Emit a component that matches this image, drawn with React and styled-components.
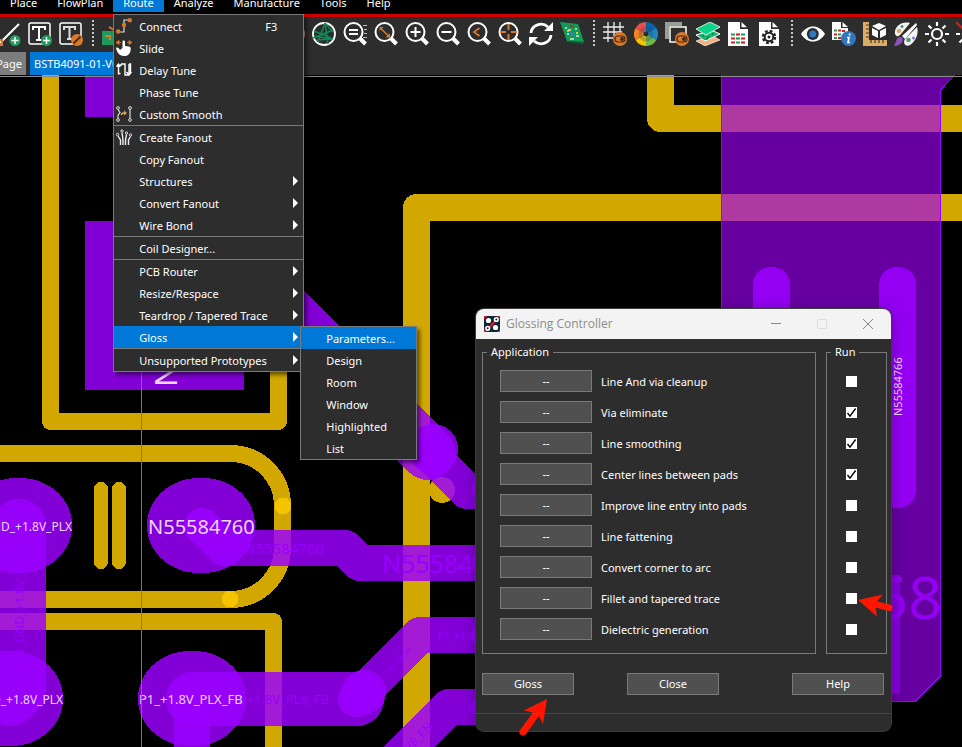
import React from "react";
import styled, { createGlobalStyle, css } from "styled-components";

const UI_FONT = '"Noto Sans", "Open Sans", sans-serif';
const PANEL = "#2d2d2d";
const EDGE = "#7a7a7a";
const ACCENT = "#0078d7";
const GOLD = "#d2a800";
const ORANGE = "#d9792b";
const GREEN = "#1f9a5a";
const BLUE = "#3277bd";
const COPPER = "rgba(155, 0, 255, 0.84)";
const VIOLET = "#9800ff";

const GlobalStyle = createGlobalStyle`
  *, *::before, *::after { box-sizing: border-box; }
  body {
    margin: 0;
    overflow: hidden;
    background: #000;
    font-family: ${UI_FONT};
    font-size: 11px;
    color: #fff;
  }
  button, input { font: inherit; color: inherit; }
`;

const App = styled.div`
  display: flex;
  flex-direction: column;
  height: 100vh;
  overflow: hidden;
`;

/* ---------- menu bar ---------- */

const MenuBar = styled.nav`
  position: relative;
  z-index: 3;
  display: flex;
  flex: none;
  height: 14px;
  background: #000;
`;

const MenuSlot = styled.div`
  position: relative;
`;

const MenuTitle = styled.button`
  display: flex;
  align-items: flex-start;
  height: 12px;
  padding: 0 10px;
  border: 0;
  background: ${(p) => (p.$open ? ACCENT : "transparent")};
  color: #fff;
  line-height: 6px;
  white-space: nowrap;
`;

const popup = css`
  position: absolute;
  border: 1px solid ${EDGE};
  background: ${PANEL};
  box-shadow: 3px 3px 4px rgba(0, 0, 0, 0.5);
`;

const Dropdown = styled.div`
  ${popup}
  top: 14px;
  left: 0;
  width: 191px;
`;

const Submenu = styled.div`
  ${popup}
  top: 0;
  left: 186px;
  width: 117px;
`;

const MenuGroup = styled.div`
  & + & {
    border-top: 1px solid ${EDGE};
  }
`;

const ItemWrap = styled.div`
  position: relative;
`;

const MenuItem = styled.button`
  display: grid;
  grid-template-columns: 25px 1fr auto 10px;
  align-items: center;
  width: 100%;
  height: 22px;
  padding: 0;
  border: 0;
  background: ${(p) => (p.$active ? ACCENT : "transparent")};
  color: #fff;
  text-align: left;
  white-space: nowrap;
`;

const ItemIcon = styled.span`
  display: flex;
  width: 16px;
  height: 16px;
  margin-left: 2px;
`;

const Shortcut = styled.span`
  padding-right: 16px;
`;

const SubArrow = styled.span`
  width: 0;
  height: 0;
  border: solid transparent;
  border-width: 5px 0 5px 5px;
  border-left-color: #fff;
`;

/* ---------- toolbar and tabs ---------- */

const Toolbar = styled.div`
  display: flex;
  flex: none;
  gap: 7px;
  height: 38px;
  padding: 5px 0;
  margin-left: -3px;
  border-top: 3px solid #cf0000;
  background: ${PANEL};
`;

const ToolButton = styled.button`
  flex: none;
  width: 24px;
  height: 24px;
  padding: 0;
  border: 0;
  background: none;

  svg {
    display: block;
  }
`;

const ToolDivider = styled.span`
  flex: none;
  width: 5px;
  height: 26px;
  margin-top: -2px;
  background: repeating-linear-gradient(#c8c8c8 0 2px, transparent 2px 4px) center / 2px 100% no-repeat;
`;

const TabRow = styled.div`
  display: flex;
  flex: none;
  gap: 4px;
  height: 23px;
  background: ${PANEL};
`;

const Tab = styled.button`
  display: flex;
  align-items: center;
  justify-content: ${(p) => (p.$active ? "flex-start" : "flex-end")};
  width: ${(p) => (p.$active ? "110px" : "26px")};
  padding: 0 4px;
  border: 0;
  background: ${(p) => (p.$active ? ACCENT : "#7d7d7d")};
  color: #fff;
  white-space: nowrap;
`;

/* ---------- board ---------- */

const Workspace = styled.main`
  position: relative;
  display: flex;
  flex: 1;
  min-height: 0;
`;

const BoardSvg = styled.svg`
  flex: 1;
  min-width: 0;
  font-family: "Noto Sans", sans-serif;
`;

const Arrow = styled.svg`
  position: absolute;
  z-index: 2;
  left: ${(p) => p.$x}px;
  top: ${(p) => p.$y}px;
  pointer-events: none;
`;

/* ---------- dialog ---------- */

const Dialog = styled.section`
  position: absolute;
  z-index: 1;
  left: 476px;
  top: 234px;
  width: 415px;
  overflow: hidden;
  border-radius: 8px;
  background: ${PANEL};
  box-shadow: 0 0 0 1px #3c3c3c, 0 2px 14px rgba(0, 0, 0, 0.35);
`;

const TitleBar = styled.header`
  display: flex;
  align-items: center;
  height: 30px;
  padding-left: 8px;
  background: #f3f3f3;
  color: #8c8c8c;
`;

const Title = styled.h1`
  flex: 1;
  margin: 0 0 0 6px;
  font-size: 12px;
  font-weight: 400;
  font-family: "Open Sans", sans-serif;
  line-height: 14px;
`;

const CaptionButton = styled.button`
  display: grid;
  place-items: center;
  width: 46px;
  height: 30px;
  padding: 0;
  border: 0;
  background: none;
`;

const Groups = styled.div`
  display: grid;
  grid-template-columns: 1fr 61px;
  gap: 10px;
  padding: 6px 4px 0 6px;
`;

const Group = styled.fieldset`
  min-width: 0;
  margin: 0;
  padding: 7px 0 8px;
  border: 1px solid ${EDGE};
`;

const Legend = styled.legend`
  height: 14px;
  margin-left: 4px;
  padding: 0 4px;
  line-height: 14px;
`;

const PassRow = styled.div`
  display: flex;
  align-items: center;
  gap: 9px;
  height: 30px;
  margin-bottom: 1px;
  padding-left: 17px;
`;

const CheckRow = styled.div`
  display: flex;
  align-items: center;
  height: 31px;
  padding-left: 19px;
`;

const PushButton = styled.button`
  width: 92px;
  height: 22px;
  padding: 0;
  border: 1px solid ${EDGE};
  background: #505050;
  color: #fff;
  line-height: 20px;
`;

const CheckBox = styled.input`
  appearance: none;
  width: 11px;
  height: 11px;
  margin: 0;
  background: #fff;

  &:checked {
    background: #fff
      url("data:image/svg+xml,%3Csvg xmlns='http://www.w3.org/2000/svg' viewBox='0 0 11 11'%3E%3Cpath d='M1.5 6l2.5 3.2L9.6 1.5' fill='none' stroke='%23000' stroke-width='1.4'/%3E%3C/svg%3E");
  }
`;

const Actions = styled.div`
  display: grid;
  grid-template-columns: 145px 165px 92px;
  padding: 19px 0 18px 6px;
`;

const StatusBar = styled.footer`
  height: 18px;
  border-top: 1px solid #464646;
`;

/* ---------- icons ---------- */

const Glyph = ({ children }) => (
  <svg width="24" height="24" viewBox="0 0 24 24" fill="none" aria-hidden="true">
    {children}
  </svg>
);

const Lens = ({ children }) => (
  <Glyph>
    <circle cx="10.5" cy="10" r="9" stroke="#fff" strokeWidth="2" />
    <path d="M17 16.5l5.5 5.5" stroke="#fff" strokeWidth="4" />
    {children}
  </Glyph>
);

const Toggle = ({ x = 17, y = 17 }) => (
  <g>
    <circle cx={x} cy={y} r="7" fill={ORANGE} />
    <rect x={x - 5} y={y - 3} width="10" height="6" rx="3" stroke="#4a2a10" strokeWidth="1.2" />
    <circle cx={x + 2} cy={y} r="2" fill="#4a2a10" />
  </g>
);

const DocPath = () => <path d="M1 0h12v7h8v17H1z M14.500 0L20 5.200h-5.500z" fill="#fff" />;

const icons = {
  addLine: (
    <Glyph>
      <path d="M3 21L22 2" stroke="#fff" strokeWidth="2" />
      <rect x="1" y="18" width="4" height="5" stroke={ORANGE} strokeWidth="2" />
      <circle cx="18" cy="18.500" r="5.500" fill={GREEN} />
      <path d="M18 15v7M14.500 18.500h7" stroke="#fff" strokeWidth="1.500" />
    </Glyph>
  ),
  addText: (
    <Glyph>
      <rect x="1" y="1" width="21" height="21" rx="2" stroke="#fff" strokeWidth="1.500" />
      <path d="M5 8V5h12v3M11 5v13M8 18h6" stroke="#fff" strokeWidth="2" />
      <circle cx="18.500" cy="18.500" r="5.500" fill={GREEN} />
      <path d="M18.500 15v7M15 18.500h7" stroke="#fff" strokeWidth="1.500" />
    </Glyph>
  ),
  editText: (
    <Glyph>
      <rect x="1" y="1" width="21" height="21" rx="2" stroke="#fff" strokeWidth="1.500" />
      <path d="M5 8V5h11v3M10.500 5v12M8 17h5" stroke="#ddd" strokeWidth="2" />
      <circle cx="18" cy="18" r="6" fill={ORANGE} />
      <path d="M14.500 21.500l7-7" stroke="#4a2a10" strokeWidth="2" />
    </Glyph>
  ),
  chip: (
    <Glyph>
      <rect x="0" y="9" width="18" height="14" fill={GREEN} />
      <path d="M7 5l5 3M3 14h5v4" stroke={ORANGE} strokeWidth="2" />
    </Glyph>
  ),
  red: (
    <Glyph>
      <circle cx="12" cy="12" r="11" stroke="#d9a0a0" strokeWidth="2" />
    </Glyph>
  ),
  net: (
    <Glyph>
      <circle cx="12" cy="12" r="11" stroke="#fff" strokeWidth="1.800" />
      <path d="M13 1L6 20M13 1l3 21M2 9l19 8M1 16l20-8M5 18l15-1M13 1l8 9M2 14l17 3" stroke="#0c8a58" strokeWidth="1.500" />
    </Glyph>
  ),
  zoomFit: (
    <Lens>
      <path d="M6 8h9M6 12h9" stroke="#fff" strokeWidth="1.800" />
      <path d="M20 3.500h4M21 7.500h3M21 11.500h3M20 15.500h4" stroke="#bbb" strokeWidth="1" />
    </Lens>
  ),
  zoomArea: (
    <Lens>
      <path d="M7 6.500l7.500 7.500" stroke={ORANGE} strokeWidth="1.500" />
      <path d="M5.500 5h4l-4 4zM16 11v4.500h-4.500z" fill={ORANGE} />
    </Lens>
  ),
  zoomIn: (
    <Lens>
      <path d="M5.500 10h10M10.500 5v10" stroke="#fff" strokeWidth="2" />
    </Lens>
  ),
  zoomOut: (
    <Lens>
      <path d="M5.500 10h10" stroke="#fff" strokeWidth="2" />
    </Lens>
  ),
  zoomPrev: (
    <Lens>
      <path d="M12.500 6L7 10l5.500 4" stroke={ORANGE} strokeWidth="1.800" />
    </Lens>
  ),
  zoomCenter: (
    <Lens>
      <path d="M10.500 2v6M10.500 12v6M2 10h6M13 10h6" stroke={ORANGE} strokeWidth="2" />
    </Lens>
  ),
  refresh: (
    <Glyph>
      <path d="M2 11A10 9.500 0 0 1 19 5M22 13A10 9.500 0 0 1 5 19" stroke="#fff" strokeWidth="2.800" />
      <path d="M24 0v9h-9zM0 24v-9h9z" fill="#fff" />
    </Glyph>
  ),
  board: (
    <Glyph>
      <path d="M0 0l18 2 6 18-17-1z" fill="#149a58" />
      <path d="M6 19l18 1-1 2-16-2z" fill="#0b6138" />
      <path d="M10 3h4v3h-4z" fill="#8d4a24" />
      <path d="M5 6h2M8 8h3M15 7h2M7 12h2M16 14h3M10 17h4" stroke="#cfe8d8" strokeWidth="1.500" />
      <path d="M10 10l4 1 1 3-4-1z" fill="#3a80d0" />
      <path d="M7 9h2M16 11h2" stroke="#f0c030" strokeWidth="2" />
    </Glyph>
  ),
  grid: (
    <Glyph>
      <path d="M5 0v20M11 0v14M17 0v10M0 5h21M0 10h19M0 16h10" stroke="#eee" strokeWidth="1.300" />
      <Toggle />
    </Glyph>
  ),
  wheel: (
    <Glyph>
      {["#0a63a5", "#1a86c8", "#70b848", "#f7c600", "#f58220", "#ef4b4b"].map((c, i) => (
        <path key={c} d="M12 12V0A12 12 0 0 1 22.400 6z" fill={c} transform={`rotate(${i * 60} 12 12)`} />
      ))}
      <circle cx="12" cy="12" r="5.500" stroke="#2a4b68" strokeWidth="4" opacity="0.3" />
      <circle cx="12" cy="12" r="2.500" fill={PANEL} />
    </Glyph>
  ),
  layerBox: (
    <Glyph>
      <path d="M0 0h17v4H4v13H0z" fill="#9d9d98" />
      <rect x="5" y="5" width="16" height="15" stroke="#fff" strokeWidth="1.500" />
      <Toggle />
    </Glyph>
  ),
  stack: (
    <Glyph>
      <path d="M0 19l15-6 9 5-15 6z" fill="#f3b184" stroke="#fff" strokeWidth=".6" />
      <path d="M0 13l15-5 9 4-15 7z" fill="#15b873" stroke="#fff" strokeWidth="1" />
      <path d="M0 7l14-7 10 5-14 8z" fill="#0bd488" stroke="#fff" strokeWidth=".8" />
      <path d="M6 14h2M11 15h2M16 12h2M10 17h2" stroke="#063" strokeWidth="1.200" />
    </Glyph>
  ),
  report: (
    <Glyph>
      <DocPath />
      <path d="M4 12.500h4M14 12.500h4M9 20.500h4" stroke="#1f9a5a" strokeWidth="2.200" />
      <path d="M9 12.500h4M4 16.500h4M14 16.500h4M4 20.500h4" stroke="#d02020" strokeWidth="2.200" />
      <path d="M9 16.500h4" stroke="#1f9a5a" strokeWidth="2.200" />
      <path d="M14 20.500h4" stroke="#d02020" strokeWidth="2.200" />
    </Glyph>
  ),
  reportGear: (
    <Glyph>
      <DocPath />
      <circle cx="11" cy="15" r="6" stroke="#222" strokeWidth="2.500" strokeDasharray="2.700 2.010" />
      <circle cx="11" cy="15" r="4.300" stroke="#222" strokeWidth="2" />
      <circle cx="11" cy="15" r="1.500" fill="#222" />
    </Glyph>
  ),
  eye: (
    <Glyph>
      <path d="M0 12C6 2 18 2 24 12 18 22 6 22 0 12z" fill="#fff" />
      <circle cx="11.800" cy="12" r="6" fill="#24303a" />
      <circle cx="11.800" cy="12" r="3.500" fill={BLUE} />
    </Glyph>
  ),
  reportInfo: (
    <Glyph>
      <path d="M0 0h9v6h7v12H0zM10.500 0L16 5h-5.500z" fill="#fff" />
      <path d="M2 8.500h3M6 12.500h3M2 16h3" stroke={GREEN} strokeWidth="2" />
      <path d="M6 8.500h3M2 12.500h3M6 16h3M10 9h3" stroke="#d02020" strokeWidth="2" />
      <circle cx="16.500" cy="16.500" r="7.500" fill={BLUE} />
      <path d="M17.600 11.500v2M15 15.500h2l-1 5h2" stroke="#fff" strokeWidth="1.600" />
    </Glyph>
  ),
  measure: (
    <Glyph>
      <path d="M0 0h6v18h18v6H0z" fill="#d9ac68" />
      <path d="M3 3h3M3 7h3M3 11h3M3 15h3M8 18v3M12 18v3M16 18v3M20 18v3" stroke="#4a3515" strokeWidth="1.200" />
      <path d="M16 1l7 3-7 4-7-4zM9 6l6 3v7l-6-3zM23 6l-6 3v7l6-3z" fill="#fff" />
    </Glyph>
  ),
  palette: (
    <Glyph>
      <path d="M1 12C0 5 7-1 16 1L7 12c-2 2-4 4-6 0zM11 17L23 5c2 6-1 14-7 18-3 2-8 0-5-6z" fill="#f4f4f4" />
      <path d="M8 14L22 1l1 2-12 14z" fill="#fff" />
      <circle cx="8" cy="4.500" r="1.500" fill="#2f9e6a" />
      <circle cx="5" cy="9" r="2.300" fill="#d9ac68" />
      <circle cx="14.500" cy="18" r="2.300" fill="#4d9a74" />
      <circle cx="19.500" cy="16" r="1.500" fill="#9a6fc8" />
      <path d="M0 24l3-7c2-3 5-2 6 0 0 4-4 7-9 7z" fill="#8a55b5" />
    </Glyph>
  ),
  sun: (
    <Glyph>
      <circle cx="12" cy="12" r="5" stroke="#fff" strokeWidth="2.200" />
      <path d="M12 0v4M12 20v4M0 12h4M20 12h4M3.500 3.500l3 3M17.500 17.500l3 3M3.500 20.500l3-3M17.500 6.500l3-3" stroke="#fff" strokeWidth="2.200" />
    </Glyph>
  ),
  sunOff: (
    <Glyph>
      <circle cx="12" cy="12" r="5" stroke="#fff" strokeWidth="2.200" />
      <path d="M0 12h4M3.500 20.500l3-3" stroke="#fff" strokeWidth="2.200" />
      <path d="M0 0l12 12" stroke="#d02020" strokeWidth="2" />
    </Glyph>
  ),
};

const Small = ({ children }) => (
  <svg width="16" height="16" viewBox="0 0 16 16" fill="none" aria-hidden="true">
    {children}
  </svg>
);

const menuIcons = {
  connect: (
    <Small>
      <path d="M2 14h6V8M8 6V2h6" stroke="#ddd" strokeWidth="1.200" />
      <circle cx="2.200" cy="13.500" r="2.200" fill={ORANGE} />
      <circle cx="8" cy="7" r="2.200" fill={ORANGE} />
      <circle cx="13.800" cy="2.200" r="2.200" fill={ORANGE} />
    </Small>
  ),
  slide: (
    <Small>
      <path d="M0 2.500L3 .5v4zM16 2.500l-3-2v4zM2 2.500h3M11 2.500h3" stroke={ORANGE} fill={ORANGE} strokeWidth=".8" />
      <path d="M6.500 1.500C6.500 0 9 0 9 1.500V6l4 .5c2 .5 2 2 1.500 4C14 14 12 16 8 16 4 16 1 13 0 8c1.500-1 3 0 4 2l2.500-2z" fill="#fff" />
    </Small>
  ),
  delay: (
    <Small>
      <path d="M.5 4.500L2.500 2l2 2.500M2.500 2v10.500M2.500 11.500h2M5 2h4v11h4V2M5 2v2M10.500 10L13 13l2.500-3M13 2h1.500v10" stroke="#fff" strokeWidth="1.400" />
    </Small>
  ),
  smooth: (
    <Small>
      <circle cx="2" cy="2" r="1.400" stroke="#ddd" />
      <circle cx="2" cy="14" r="1.400" stroke="#ddd" />
      <circle cx="14" cy="2" r="1.400" stroke="#ddd" />
      <circle cx="14" cy="14" r="1.400" stroke="#ddd" />
      <path d="M2 3.500l2 3-2 3v3M14 3.500v9" stroke="#ddd" strokeWidth="1.200" />
      <path d="M5.500 9c0-2 1-2 2.500-2" stroke="#dba657" strokeWidth="1.600" />
      <path d="M8 4.500L11 7 8 9.500z" fill="#dba657" />
    </Small>
  ),
  fanout: (
    <Small>
      <circle cx="1.500" cy="5.500" r="1.200" stroke="#ddd" />
      <circle cx="6" cy="2" r="1.200" stroke="#ddd" />
      <circle cx="10.500" cy="4" r="1.200" stroke="#ddd" />
      <circle cx="14.500" cy="6" r="1.200" stroke="#ddd" />
      <path d="M2 7l2.500 4v5M6 3.500L7 11v5M10.500 5.500L9.500 11v5M14.500 7.500L12.500 11v5" stroke="#eee" strokeWidth="1.400" />
    </Small>
  ),
};

/* ---------- data ---------- */

const toolGroups = [
  ["addLine", "addText", "editText"],
  ["chip", "board", "grid"],
  ["net", "chip"],
  [
    "red", "net", "zoomFit", "zoomArea", "zoomIn", "zoomOut", "zoomPrev", "zoomCenter", "refresh", "board",
  ],
  ["grid", "wheel", "layerBox", "stack", "report", "reportGear"],
  ["eye", "reportInfo", "measure", "palette", "sun", "sunOff"],
];

const routeMenu = [
  [
    { label: "Connect", icon: "connect", key: "F3" },
    { label: "Slide", icon: "slide" },
    { label: "Delay Tune", icon: "delay" },
    { label: "Phase Tune" },
    { label: "Custom Smooth", icon: "smooth" },
  ],
  [
    { label: "Create Fanout", icon: "fanout" },
    { label: "Copy Fanout" },
    { label: "Structures", more: true },
    { label: "Convert Fanout", more: true },
    { label: "Wire Bond", more: true },
  ],
  [{ label: "Coil Designer..." }],
  [
    { label: "PCB Router", more: true },
    { label: "Resize/Respace", more: true },
    { label: "Teardrop / Tapered Trace", more: true },
    {
      label: "Gloss",
      more: true,
      items: ["Parameters...", "Design", "Room", "Window", "Highlighted", "List"],
    },
  ],
  [{ label: "Unsupported Prototypes", more: true }],
];

const passes = [
  ["Line And via cleanup", false],
  ["Via eliminate", true],
  ["Line smoothing", true],
  ["Center lines between pads", true],
  ["Improve line entry into pads", false],
  ["Line fattening", false],
  ["Convert corner to arc", false],
  ["Fillet and tapered trace", false],
  ["Dielectric generation", false],
];

/* ---------- parts ---------- */

function RouteDropdown() {
  return (
    <Dropdown>
      {routeMenu.map((group) => (
        <MenuGroup key={group[0].label}>
          {group.map((item) => (
            <ItemWrap key={item.label}>
              <MenuItem $active={Boolean(item.items)}>
                <ItemIcon>{item.icon && menuIcons[item.icon]}</ItemIcon>
                <span>{item.label}</span>
                <Shortcut>{item.key}</Shortcut>
                {item.more && <SubArrow />}
              </MenuItem>
              {item.items && (
                <Submenu>
                  {item.items.map((label, i) => (
                    <MenuItem key={label} $active={i === 0}>
                      <span />
                      <span>{label}</span>
                    </MenuItem>
                  ))}
                </Submenu>
              )}
            </ItemWrap>
          ))}
        </MenuGroup>
      ))}
    </Dropdown>
  );
}

function Board() {
  return (
    <BoardSvg role="img" aria-label="PCB layout">
      <g transform="translate(0 -75)">
        <g fill="none" stroke={GOLD} strokeLinejoin="round" shapeRendering="crispEdges">
          <path d="M50.500 60V421.500H278.500V60" strokeWidth="17" />
          <path d="M-10 453.500H231A52 52 0 0 1 282.500 506V548A52 52 0 0 1 231 599.500H-10" strokeWidth="17" />
          <path d="M-10 621.500H273.500V760" strokeWidth="17" />
          <path d="M101 489V562M119 489V562" strokeWidth="14" strokeLinecap="round" />
          <path d="M416.500 760V207.500H2000M660.500 60V118.500H2000" strokeWidth="27" />
          <circle cx="442" cy="490" r="13" fill={GOLD} stroke="none" />
          <circle cx="283" cy="506" r="8.500" fill="#f5c400" stroke="none" />
          <circle cx="230" cy="599" r="8.500" fill="#f5c400" stroke="none" />
        </g>

        <g fill={COPPER} shapeRendering="crispEdges">
          <rect x="85" y="60" width="159" height="57" />
          <rect x="85" y="221" width="159" height="169" />
          <rect x="-36" y="478" width="108" height="95" rx="52" ry="47" />
          <rect x="147" y="478" width="108" height="95" rx="52" ry="47" />
          <rect x="-45" y="651" width="108" height="95" rx="52" ry="47" />
          <rect x="138" y="651" width="108" height="95" rx="52" ry="47" />
          <circle cx="433" cy="449" r="25" />
          <circle cx="364" cy="692" r="22" />
          <circle cx="485" cy="490" r="13" />
          <circle cx="485" cy="563" r="13" />
          <circle cx="485" cy="635" r="13" />
          <circle cx="485" cy="707" r="13" />
        </g>

        <g fill="none" stroke={COPPER} strokeLinejoin="round" strokeLinecap="round" shapeRendering="crispEdges">
          <path d="M19 526V690L10 699" strokeWidth="54" />
          <path d="M193 699H357" strokeWidth="54" />
          <path d="M250 275L428 453" strokeWidth="54" />
          <path d="M202 526L225 548H345L360 563H500" strokeWidth="36" />
          <path d="M192 699V770" strokeWidth="36" />
          <path d="M430 454L467 491H500" strokeWidth="36" />
          <path d="M356 699L420 635H500" strokeWidth="36" />
          <path d="M396 760L449 707H500" strokeWidth="36" />
        </g>

        <g shapeRendering="crispEdges">
          <path
            d="M721.500 60H969L940.500 90V676L915 701.500H721.500z"
            fill="rgba(155, 0, 245, 0.66)"
            stroke={VIOLET}
          />
          <rect x="753" y="267" width="37" height="240" rx="18" fill="#9300f2" />
          <rect x="879" y="267" width="37" height="241" rx="18" fill="#9300f2" />
          <rect x="753" y="575" width="147" height="119" fill="#8400dc" />
        </g>

        <g fill={VIOLET}>
          <text x="942" y="619" fontSize="59" textAnchor="end" fill="#9300f2">58</text>
          <text x="244" y="554" fontSize="15">N55584760</text>
          <text x="382" y="573" fontSize="25">N55584</text>
          <text x="329" y="704" fontSize="13" textAnchor="end">+1.8V_PLX_FB</text>
          <text x="438" y="640" fontSize="10">P1_+1.8V</text>
          <text x="468" y="711" fontSize="8">P1</text>
          <text transform="translate(378 684) rotate(-45)" fontSize="6">P1_+1.8V_PLX_FB</text>
          <text transform="translate(404 757) rotate(-45)" fontSize="12">1V8_EN</text>
          <text transform="translate(24 662) rotate(-90)" fontSize="12">P1_GND_+1.8V_PLX</text>
          <text transform="translate(197 747) rotate(-90)" fontSize="12">_FB</text>
        </g>

        <g fill="#efd4ff">
          <text x="148" y="534" fontSize="20">N55584760</text>
          <text x="72" y="531" fontSize="12" textAnchor="end">GND_+1.8V_PLX</text>
          <text x="63" y="704" fontSize="12" textAnchor="end">GND_+1.8V_PLX</text>
          <text x="139" y="704" fontSize="13">P1_+1.8V_PLX_FB</text>
          <text transform="translate(902 416) rotate(-90)" fontSize="11">N55584766</text>
          <text transform="translate(177 387) rotate(-90)" fontSize="31">N55584</text>
        </g>

        <path d="M141.500 75V2000" stroke="#777" />
        <rect x="0" y="76" width="100%" height="1" fill="#8a8a8a" />
      </g>
    </BoardSvg>
  );
}

function GlossingDialog() {
  return (
    <Dialog role="dialog" aria-labelledby="dialog-title">
      <TitleBar>
        <svg width="16" height="16" viewBox="0 0 16 16" fill="none" aria-hidden="true">
          <rect width="16" height="16" rx="1.500" fill="#0c2836" />
          <path d="M0 3V1.500L1.500 0H3M13 0h1.500L16 1.500V3M0 13v1.500L1.500 16H3M13 16h1.500l1.500-1.500V13" stroke="#e4173c" strokeWidth="1.500" />
          <path d="M4.500 12.500L12 4" stroke="#e4173c" strokeWidth="2" />
          <circle cx="4.500" cy="4.500" r="2.600" fill="#fff" />
          <circle cx="11.500" cy="11.500" r="2.600" fill="#fff" />
          <circle cx="12.300" cy="3.500" r="1.800" fill="#0c2836" stroke="#fff" strokeWidth="1.600" />
          <circle cx="3.700" cy="12.300" r="1.800" fill="#0c2836" stroke="#fff" strokeWidth="1.600" />
        </svg>
        <Title id="dialog-title">Glossing Controller</Title>
        <CaptionButton aria-label="Minimize">
          <svg width="10" height="10" stroke="#8c8c8c"><path d="M0 4.500h10" /></svg>
        </CaptionButton>
        <CaptionButton aria-label="Maximize" disabled>
          <svg width="10" height="10" fill="none" stroke="#dcdcdc"><rect x=".5" y=".5" width="9" height="9" rx="1" /></svg>
        </CaptionButton>
        <CaptionButton aria-label="Close window">
          <svg width="10" height="10" stroke="#858585"><path d="M0 0l10 10M10 0L0 10" /></svg>
        </CaptionButton>
      </TitleBar>
      <Groups>
        <Group>
          <Legend>Application</Legend>
          {passes.map(([label], i) => (
            <PassRow key={label}>
              <PushButton aria-label={`${label} settings`}>--</PushButton>
              <label htmlFor={`run-${i}`}>{label}</label>
            </PassRow>
          ))}
        </Group>
        <Group>
          <Legend>Run</Legend>
          {passes.map(([label, on], i) => (
            <CheckRow key={label}>
              <CheckBox type="checkbox" id={`run-${i}`} defaultChecked={on} />
            </CheckRow>
          ))}
        </Group>
      </Groups>
      <Actions>
        <PushButton>Gloss</PushButton>
        <PushButton>Close</PushButton>
        <PushButton>Help</PushButton>
      </Actions>
      <StatusBar />
    </Dialog>
  );
}

export default function Page() {
  return (
    <App>
      <GlobalStyle />
      <MenuBar>
        {["Place", "FlowPlan", "Route", "Analyze", "Manufacture", "Tools", "Help"].map((name) => (
          <MenuSlot key={name}>
            <MenuTitle $open={name === "Route"}>{name}</MenuTitle>
            {name === "Route" && <RouteDropdown />}
          </MenuSlot>
        ))}
      </MenuBar>
      <Toolbar>
        {toolGroups.map((group, g) => (
          <React.Fragment key={g}>
            {g > 0 && <ToolDivider />}
            {group.map((name) => (
              <ToolButton key={name} aria-label={name}>{icons[name]}</ToolButton>
            ))}
          </React.Fragment>
        ))}
      </Toolbar>
      <TabRow>
        <Tab>Page</Tab>
        <Tab $active>BSTB4091-01-V0</Tab>
      </TabRow>
      <Workspace>
        <Board />
        <GlossingDialog />
        <Arrow $x={857} $y={518} width="36" height="26" aria-hidden="true">
          <path d="M1 7L26 1.500L20 8.500L33 11.500A3.300 3.300 0 0 1 32 18L18.500 14.500L20 23.500z" fill="#ff1500" />
        </Arrow>
        <Arrow $x={518} $y={623} width="32" height="40" aria-hidden="true">
          <path d="M29 1L25 26L21 18L8 36A3.300 3.300 0 0 1 2 32L15 14.500L6 12.500z" fill="#ff1500" />
        </Arrow>
      </Workspace>
    </App>
  );
}
